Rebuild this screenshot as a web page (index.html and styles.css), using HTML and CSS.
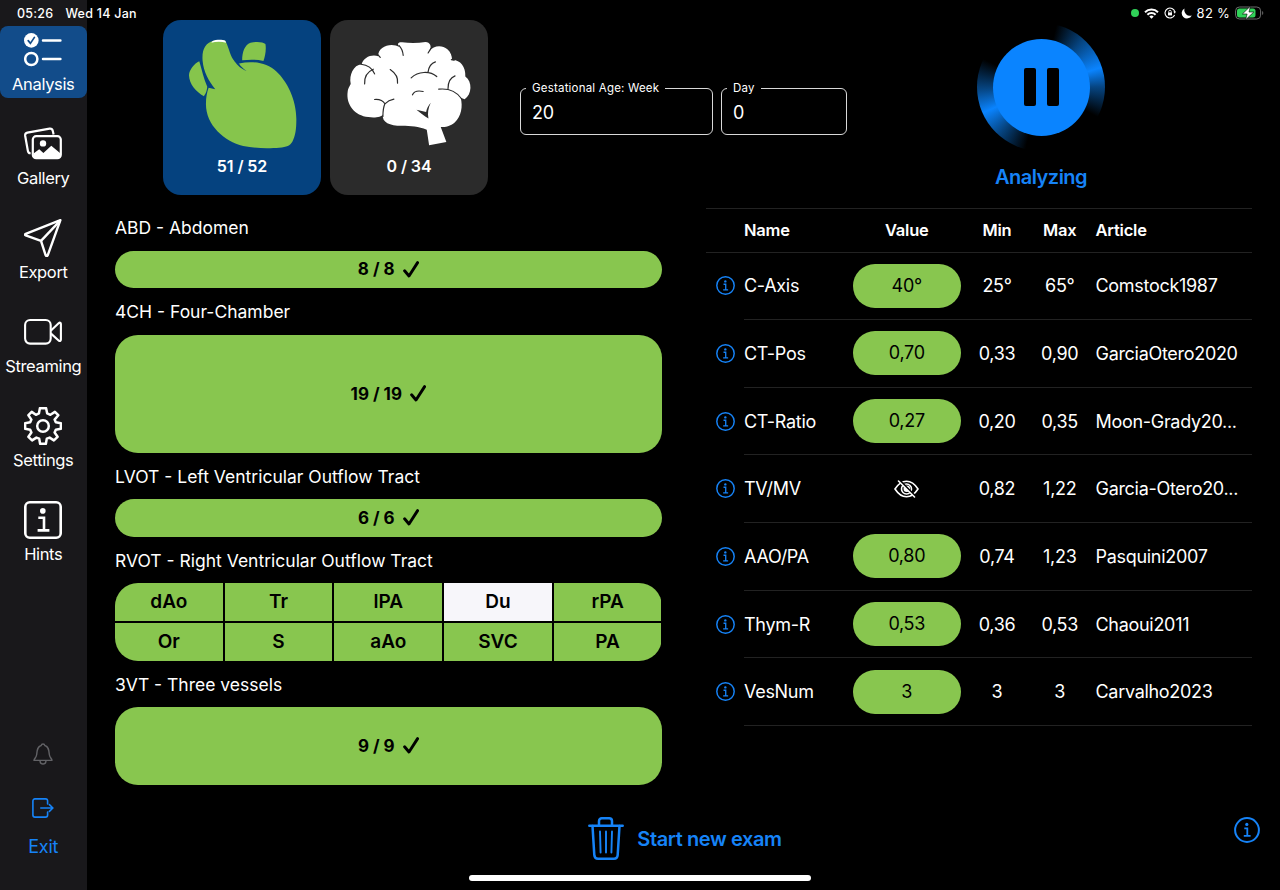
FILE: index.html
```html
<!DOCTYPE html>
<html lang="en">
<head>
    <meta charset="UTF-8">
    <meta name="viewport" content="width=device-width, initial-scale=1.0">
    <title>Analysis</title>
    <link rel="stylesheet" href="styles.css">
</head>
<body>

    <svg class="defs" width="0" height="0">
        <symbol id="info" viewBox="0 0 26 26">
            <circle cx="13" cy="13" r="11.9" fill="none" stroke="currentColor" stroke-width="2"/>
            <circle cx="12.8" cy="7.4" r="1.6" fill="currentColor"/>
            <path d="M10.3 11.3h3v7.4M9.8 18.9h6.8" fill="none" stroke="currentColor" stroke-width="1.8"/>
        </symbol>
        <symbol id="check" viewBox="0 0 16 17">
            <path d="M1.6 9.8L6 15L14.6 1.6" fill="none" stroke="currentColor" stroke-width="2.9" stroke-linecap="round" stroke-linejoin="round"/>
        </symbol>
    </svg>

    <div class="status-bar">
        <span class="time">05:26</span>
        <span class="date">Wed 14 Jan</span>
        <div class="status-icons">
            <span class="dot"></span>
            <svg width="15" height="11" viewBox="0 0 15 11" fill="none" stroke="#fff" stroke-width="2">
                <path d="M1 4.2a9.3 9.3 0 0 1 13 0M3.4 6.7a5.9 5.9 0 0 1 8.2 0"/>
                <path d="M7.5 10.8L5.3 8.6a3.2 3.2 0 0 1 4.4 0z" fill="#fff" stroke="none"/>
            </svg>
            <svg width="12" height="12" viewBox="0 0 12 12" fill="none" stroke="#fff" stroke-width="1.1">
                <path d="M10.6 8A5 5 0 1 1 10.9 5"/>
                <path d="M9.3 4.6h2.6L10.8 6.8z" fill="#fff" stroke="none"/>
                <rect x="4" y="5.4" width="4" height="3" fill="#fff" stroke="none"/>
                <path d="M4.7 5.6V4.6a1.3 1.3 0 0 1 2.6 0v1" stroke-width=".8"/>
            </svg>
            <svg width="11" height="11" viewBox="0 0 11 11">
                <path d="M3.6 .4A5.3 5.3 0 1 0 10.8 7.4A5.6 5.6 0 0 1 3.6 .4z" fill="#fff"/>
            </svg>
            <span class="battery-text">82 %</span>
            <svg width="29" height="14" viewBox="0 0 29 14">
                <rect x=".6" y="1" width="25" height="12" rx="3.8" fill="none" stroke="#6c6c6c"/>
                <rect x="2" y="2.4" width="18.5" height="9.2" rx="2.5" fill="#30d158"/>
                <path d="M27.2 5v4c1.4-.6 1.4-3.4 0-4z" fill="#6c6c6c"/>
                <path d="M15.4.2L7.4 8h4.7L10.600 13.800L18.800 6H14z" fill="#fff" stroke="#000" stroke-width=".6"/>
            </svg>
        </div>
    </div>

    <div class="app">
        <nav class="sidebar">
            <a class="nav-item active">
                <svg class="nav-icon" viewBox="0 0 38 38" fill="none" stroke="#fff" stroke-width="2.5" stroke-linecap="round">
                    <circle cx="7.3" cy="9.4" r="7.3" fill="#fff" stroke="none"/>
                    <path d="M4.2 9.6l2.2 2.8 4-6" stroke="#124c8a" stroke-width="1.7"/>
                    <circle cx="7.3" cy="28" r="6.1"/>
                    <path d="M19 9.4h17.4M19 28h17.4"/>
                </svg>
                <span>Analysis</span>
            </a>
            <a class="nav-item">
                <svg class="nav-icon" viewBox="0 0 38 38" fill="none" stroke="#fff" stroke-width="2.2" stroke-linejoin="round">
                    <path d="M6.6 28.2C5 28.4 4.2 27.6 3.9 26L1.2 11C.9 9 1.7 8 3.4 7.6L25.6 3.7C27.4 3.5 28.4 4.3 28.8 6L29.6 9.5"/>
                    <rect x="8.8" y="11.2" width="28" height="22" rx="3.4"/>
                    <circle cx="19" cy="18.4" r="3.2" fill="#fff" stroke="none"/>
                    <path d="M9.5 28.6L15.2 24.2L19.4 28L27.3 20.8L36.3 28.3V32L34 33.6H11.5L9.5 32z" fill="#fff" stroke="none"/>
                </svg>
                <span>Gallery</span>
            </a>
            <a class="nav-item">
                <svg class="nav-icon" viewBox="0 0 38 38" fill="none" stroke="#fff" stroke-width="2.4" stroke-linejoin="round">
                    <path d="M36.4 1.2L1.7 14.8C.8 15.2.8 16 1.7 16.4L17 21.8L21.6 36.2C22 37.3 23.2 37.3 23.7 36.3z"/>
                    <path d="M36.2 1.6L17 21.8"/>
                </svg>
                <span>Export</span>
            </a>
            <a class="nav-item">
                <svg class="nav-icon" viewBox="0 0 38 38" fill="none" stroke="#fff" stroke-width="2.1" stroke-linejoin="round">
                    <rect x="1.1" y="7" width="25.6" height="23.6" rx="5"/>
                    <path d="M27 17.4L34.6 10.2C35.8 9.2 36.9 9.5 36.9 11V26.6C36.9 28.2 35.8 28.5 34.6 27.4L27 20.6"/>
                </svg>
                <span>Streaming</span>
            </a>
            <a class="nav-item">
                <svg class="nav-icon" viewBox="0 0 38 38" fill="none" stroke="#fff" stroke-width="2.5" stroke-linejoin="round">
                    <path d="M15.9 1.2H22.1L23.2 6.4L26.4 7.8L30.9 4.9L34.3 8.2L30.6 12.6L31.8 15.3L36.9 16.2V21.8L31.8 22.7L30.6 25.6L33.6 29.8L29.9 33.4L25.6 30.6L22.8 31.6L21.9 36.8H16.1L15.2 31.6L12.4 30.6L8.1 33.4L4.4 29.8L7.4 25.6L6.2 22.7L1.1 21.8V16.2L6.2 15.3L7.4 12.6L4.4 8.2L7.7 4.9L11.9 7.8L14.9 6.4z"/>
                    <circle cx="19" cy="19" r="5.8"/>
                </svg>
                <span>Settings</span>
            </a>
            <a class="nav-item">
                <svg class="nav-icon" viewBox="0 0 38 38" fill="none" stroke="#fff" stroke-width="2.6">
                    <rect x="1.3" y="1.3" width="35.4" height="35.4" rx="4.5"/>
                    <circle cx="18.8" cy="9.9" r="2.8" fill="#fff" stroke="none"/>
                    <path d="M14.3 16.8H20V29M13.6 29.4H25.4"/>
                </svg>
                <span>Hints</span>
            </a>

            <div class="sidebar-bottom">
                <svg width="20" height="22" viewBox="0 0 20 22" fill="none" stroke="#626266" stroke-width="1.4" stroke-linejoin="round">
                    <path d="M1 17.4C1.2 15.6 3.3 14.6 3.7 11.5C4.1 7.6 4.2 3.4 8.2 2.5C8.5.5 11.5.5 11.8 2.5C15.8 3.4 15.9 7.6 16.3 11.5C16.7 14.6 18.8 15.6 19 17.4z"/>
                    <path d="M7 18C7.2 22 12.8 22 13 18"/>
                </svg>
                <a class="exit">
                    <svg width="22" height="20" viewBox="0 0 22 20" fill="none" stroke="#1683f7" stroke-width="1.6" stroke-linecap="round" stroke-linejoin="round">
                        <path d="M15.6 6V3C15.6 1.6 14.8.9 13.5.9H3C1.7.9.9 1.7.9 3V17C.9 18.3 1.7 19.1 3 19.1H13.5C14.8 19.1 15.6 18.4 15.6 17V14"/>
                        <path d="M8.8 10H20.8M17.4 6.6L20.9 10L17.4 13.4"/>
                    </svg>
                    <span>Exit</span>
                </a>
            </div>
        </nav>

        <main class="main">
            <header class="top">
                <div class="organ organ-active">
                    <svg class="heart" viewBox="90 80 340 340">
                        <path fill="#86c54c" d="M172 91C186 88 198 88 208 91C217 106 222 132 232 148C238 156 243 160 250 160C290 150 335 158 362 184C395 214 423 272 422 330C422 358 419 378 410 395C403 407 394 411 370 413C345 415 300 416 262 408C205 393 150 345 150 282C150 262 153 247 158 233L178 237C158 212 143 185 140 152C137 118 148 98 172 91z"/>
                        <path fill="#05427f" d="M234 150C246 168 258 177 272 182C262 175 254 168 249 159L242 154z"/>
                        <path fill="#86c54c" d="M259 150C259 125 266 104 284 97C304 93 322 95 329 101C332 118 328 138 323 152C300 147 280 148 259 150z"/>
                        <path fill="#86c54c" d="M130 153C115 160 100 178 99 195C100 222 120 245 144 258C150 250 152 245 154 230C143 205 138 180 130 153z"/>
                        <path fill="#fff" d="M170 92C180 87 200 87 208 91L211 97C198 93 180 93 166 97z"/>
                    </svg>
                    <span>51 / 52</span>
                </div>
                <div class="organ">
                    <svg class="brain" viewBox="570 90 385 325">
                        <path fill="#fff" d="M620 163C624 142 652 131 670 139C668 108 712 97 734 112C724 100 732 96 742 97C765 100 790 100 812 96C826 97 832 108 824 124C836 106 862 104 878 118C888 127 892 138 892 150C914 148 934 168 932 200C954 215 952 255 930 268L918 264C925 290 920 320 900 338C888 349 872 352 858 352L875 397L823 407L816 360C790 350 770 348 740 348C705 348 680 338 684 314C680 322 660 325 640 322C600 318 572 285 578 245C580 232 588 224 587 222C582 195 595 165 620 163z"/>
                        <g fill="none" stroke="#2b2b2b" stroke-width="3.6" stroke-linecap="round">
                            <path d="M618 163C640 165 652 175 659 192M629 222C628 205 632 188 655 178"/>
                            <path d="M706 179C722 190 730 205 728 220"/>
                            <path d="M769 204C790 184 825 182 846 200M820 186C822 172 830 160 842 156"/>
                            <path d="M880 236C880 218 888 203 901 198M852 238C880 235 905 245 920 266"/>
                            <path d="M659 269C672 268 684 272 690 282C696 276 706 270 717 268M690 282C684 295 684 305 684 320"/>
                            <path d="M773 255C778 244 792 242 805 245"/>
                            <path d="M732 106C740 114 744 124 745 136M668 133L676 142M828 116L820 129M890 149L898 151"/>
                        </g>
                        <path fill="#2b2b2b" d="M785 300L814 307C816 296 820 288 828 279C820 296 818 310 821 326C808 320 796 308 785 300z"/>
                    </svg>
                    <span>0 / 34</span>
                </div>

                <fieldset class="field field-week">
                    <legend>Gestational Age: Week</legend>
                    <span>20</span>
                </fieldset>
                <fieldset class="field field-day">
                    <legend>Day</legend>
                    <span>0</span>
                </fieldset>

                <div class="analyze">
                    <div class="spinner">
                        <div class="pause"><i></i><i></i></div>
                    </div>
                    <span>Analyzing</span>
                </div>
            </header>

            <div class="content">
                <section class="planes">
                    <h3>ABD - Abdomen</h3>
                    <div class="bar">8 / 8 <svg><use href="#check"/></svg></div>

                    <h3>4CH - Four-Chamber</h3>
                    <div class="bar bar-large">19 / 19 <svg><use href="#check"/></svg></div>

                    <h3>LVOT - Left Ventricular Outflow Tract</h3>
                    <div class="bar">6 / 6 <svg><use href="#check"/></svg></div>

                    <h3>RVOT - Right Ventricular Outflow Tract</h3>
                    <div class="parts">
                        <div>dAo</div>
                        <div>Tr</div>
                        <div>lPA</div>
                        <div class="missing">Du</div>
                        <div>rPA</div>
                        <div>Or</div>
                        <div>S</div>
                        <div>aAo</div>
                        <div>SVC</div>
                        <div>PA</div>
                    </div>

                    <h3>3VT - Three vessels</h3>
                    <div class="bar bar-medium">9 / 9 <svg><use href="#check"/></svg></div>
                </section>

                <section class="measures">
                    <div class="row head">
                        <span></span>
                        <span>Name</span>
                        <span class="center">Value</span>
                        <span class="center">Min</span>
                        <span class="center">Max</span>
                        <span class="article">Article</span>
                    </div>
                    <div class="row">
                        <svg class="info"><use href="#info"/></svg>
                        <span>C-Axis</span>
                        <span class="pill">40°</span>
                        <span class="center">25°</span>
                        <span class="center">65°</span>
                        <span class="article">Comstock1987</span>
                    </div>
                    <div class="row">
                        <svg class="info"><use href="#info"/></svg>
                        <span>CT-Pos</span>
                        <span class="pill">0,70</span>
                        <span class="center">0,33</span>
                        <span class="center">0,90</span>
                        <span class="article">GarciaOtero2020</span>
                    </div>
                    <div class="row">
                        <svg class="info"><use href="#info"/></svg>
                        <span>CT-Ratio</span>
                        <span class="pill">0,27</span>
                        <span class="center">0,20</span>
                        <span class="center">0,35</span>
                        <span class="article">Moon-Grady20...</span>
                    </div>
                    <div class="row">
                        <svg class="info"><use href="#info"/></svg>
                        <span>TV/MV</span>
                        <svg class="eye" width="25" height="18" viewBox="0 0 25 18" fill="none" stroke="#fff" stroke-width="1.6" stroke-linecap="round">
                            <path d="M1 9C4.5 3.6 8.5 1.3 12.5 1.3S20.5 3.6 24 9C20.5 14.4 16.5 16.7 12.5 16.7S4.5 14.4 1 9z"/>
                            <circle cx="12.5" cy="9" r="5"/>
                            <circle cx="12.8" cy="8.8" r="3.3" fill="#fff" stroke="none"/>
                            <path d="M5.5.5L21.5 16.5" stroke="#000" stroke-width="2.4"/>
                            <path d="M4.5 1L20.5 17"/>
                        </svg>
                        <span class="center">0,82</span>
                        <span class="center">1,22</span>
                        <span class="article">Garcia-Otero20...</span>
                    </div>
                    <div class="row">
                        <svg class="info"><use href="#info"/></svg>
                        <span>AAO/PA</span>
                        <span class="pill">0,80</span>
                        <span class="center">0,74</span>
                        <span class="center">1,23</span>
                        <span class="article">Pasquini2007</span>
                    </div>
                    <div class="row">
                        <svg class="info"><use href="#info"/></svg>
                        <span>Thym-R</span>
                        <span class="pill">0,53</span>
                        <span class="center">0,36</span>
                        <span class="center">0,53</span>
                        <span class="article">Chaoui2011</span>
                    </div>
                    <div class="row">
                        <svg class="info"><use href="#info"/></svg>
                        <span>VesNum</span>
                        <span class="pill">3</span>
                        <span class="center">3</span>
                        <span class="center">3</span>
                        <span class="article">Carvalho2023</span>
                    </div>
                </section>
            </div>

            <footer class="bottom">
                <a class="new-exam">
                    <svg width="36" height="43" viewBox="0 0 36 43" fill="none" stroke="#1683f7" stroke-width="2.5" stroke-linecap="round" stroke-linejoin="round">
                        <path d="M1.3 8.7H34.7"/>
                        <path d="M11 8.5V4.2C11 2.3 12 1.3 13.8 1.3H21.2C23 1.3 24 2.3 24 4.2V8.5"/>
                        <path d="M4.5 9L6.3 37.8C6.5 40.4 7.8 41.7 10 41.7H26C28.2 41.7 29.5 40.4 29.7 37.8L31.5 9"/>
                        <path d="M12 14.500L12.600 35.500M18 14.500V35.500M24 14.500L23.400 35.500" stroke-width="1.9"/>
                    </svg>
                    <span>Start new exam</span>
                </a>
                <svg class="help"><use href="#info"/></svg>
            </footer>
        </main>
    </div>

    <div class="home-indicator"></div>

</body>
</html>
```
FILE: styles.css
```css
* {
    box-sizing: border-box;
}

body {
    margin: 0;
    background: #000;
    color: #fff;
    font-family: Inter, "Liberation Sans", sans-serif;
    font-size: 18px;
    height: 890px;
    overflow: hidden;
}

.defs {
    position: absolute;
}

/* status bar lies over the sidebar and the page */
.status-bar {
    position: absolute;
    top: 0;
    left: 0;
    width: 100%;
    height: 26px;
    padding: 0 16px 0 17px;
    display: flex;
    align-items: center;
    font-size: 12.5px;
    font-weight: 500;
    letter-spacing: 0.25px;
}

.date {
    margin-left: 12px;
}

.status-icons {
    margin-left: auto;
    display: flex;
    align-items: center;
    gap: 5px;
}

.dot {
    width: 8px;
    height: 8px;
    border-radius: 50%;
    background: #30d158;
}

.battery-text {
    font-size: 13px;
    font-weight: 400;
}

.app {
    display: flex;
    height: 890px;
}

/* sidebar */
.sidebar {
    width: 86.5px;
    padding: 26px 0 32px;
    background: #19181b;
    display: flex;
    flex-direction: column;
    gap: 22px;
}

.nav-item {
    height: 72px;
    padding-top: 4.5px;
    border-radius: 8px;
    display: flex;
    flex-direction: column;
    align-items: center;
    gap: 5.5px;
    font-size: 16.5px;
    line-height: 21px;
    letter-spacing: -0.35px;
}

.nav-item.active {
    background: #124c8a;
}

.nav-icon {
    width: 38px;
    height: 38px;
}

.sidebar-bottom {
    margin-top: auto;
    display: flex;
    flex-direction: column;
    align-items: center;
    gap: 33px;
}

.exit {
    display: flex;
    flex-direction: column;
    align-items: center;
    gap: 18px;
    color: #1683f7;
    font-size: 18px;
    line-height: 22px;
    letter-spacing: -0.2px;
}

/* main area */
.main {
    flex: 1;
    display: flex;
    flex-direction: column;
    padding: 20px 28px 0 28.5px;
}

.top {
    height: 175px;
    padding-left: 48px;
    display: flex;
}

.organ {
    width: 158px;
    height: 175px;
    margin-right: 9px;
    border-radius: 18px;
    background: #2b2b2b;
    display: flex;
    flex-direction: column;
    align-items: center;
    justify-content: space-between;
    padding: 17px 0 18px;
    font-size: 16px;
    font-weight: 600;
    line-height: 21px;
    letter-spacing: -0.1px;
}

.organ-active {
    background: #05427f;
}

.heart {
    width: 113px;
    height: 113px;
}

.brain {
    width: 128px;
    height: 108px;
    margin-top: 3px;
}

.field {
    height: 54px;
    margin: 61px 8px 0 0;
    padding: 0 11px;
    border: 1px solid #d8d8d8;
    border-radius: 6px;
}

.field-week {
    width: 193px;
    margin-left: 23px;
}

.field-day {
    width: 126px;
}

.field legend {
    margin-left: -6px;
    padding: 0 6px;
    font-size: 11.5px;
    line-height: 15px;
    letter-spacing: 0.2px;
}

.field span {
    display: block;
    margin-top: 6px;
    line-height: 22px;
    letter-spacing: -0.3px;
}

.analyze {
    margin-left: auto;
    margin-right: 147px;
    margin-top: 3px;
    width: 128px;
    display: flex;
    flex-direction: column;
    align-items: center;
    gap: 14px;
    color: #1683f7;
    font-size: 20px;
    font-weight: 600;
    line-height: 24px;
    letter-spacing: -0.5px;
}

.spinner {
    width: 128px;
    height: 128px;
    border-radius: 50%;
    background: conic-gradient(transparent 14deg, #064582 42deg, #0a84ff 72deg, #064582 90deg, transparent 118deg, transparent 194deg, #064582 222deg, #0a84ff 246deg, #064582 268deg, transparent 296deg);
    display: flex;
    align-items: center;
    justify-content: center;
}

.pause {
    width: 97px;
    height: 97px;
    border-radius: 50%;
    background: #0a84ff;
    display: flex;
    align-items: center;
    justify-content: center;
    gap: 11px;
}

.pause i {
    width: 12px;
    height: 38px;
    border-radius: 2px;
    background: #000;
}

.content {
    display: flex;
    justify-content: space-between;
    height: 613px;
}

/* heart planes */
.planes {
    width: 546.5px;
    padding-top: 9.3px;
}

.planes h3 {
    margin: 0;
    padding-top: 2.2px;
    height: 46.4px;
    line-height: 44px;
    font-size: 17.5px;
    font-weight: 400;
}

.bar {
    height: 37.6px;
    border-radius: 19px;
    background: #88c64f;
    color: #000;
    display: flex;
    align-items: center;
    justify-content: center;
    gap: 8px;
    font-size: 17px;
    font-weight: 700;
}

.bar svg {
    width: 16px;
    height: 17px;
}

.bar-medium {
    height: 77.5px;
    border-radius: 23px;
}

.bar-large {
    height: 118px;
    border-radius: 23px;
}

.parts {
    height: 77.6px;
    border-radius: 23px;
    overflow: hidden;
    display: grid;
    grid-template-columns: repeat(5, 1fr);
    grid-template-rows: repeat(2, 1fr);
    gap: 2px;
    color: #000;
    font-size: 19px;
    font-weight: 600;
}

.parts div {
    display: flex;
    align-items: center;
    justify-content: center;
    background: #88c64f;
}

.parts .missing {
    background: #f7f6fa;
}

/* measurements table */
.measures {
    width: 546.5px;
    padding-top: 13px;
}

.row {
    display: grid;
    grid-template-columns: 38.5px 108.5px 108.5px 72px 53.5px 1fr;
    align-items: center;
    height: 67.65px;
    padding-bottom: 1px;
    background: linear-gradient(#222, #222) 38.5px 100% / 100% 1px no-repeat;
    letter-spacing: -0.3px;
}

.head {
    height: 44.5px;
    border-top: 1px solid #222;
    background-position: 0 100%;
    font-size: 16.5px;
    font-weight: 600;
    letter-spacing: -0.2px;
}

.center {
    text-align: center;
}

.article {
    padding-left: 9px;
    white-space: nowrap;
}

.pill {
    height: 44px;
    border-radius: 22px;
    background: #88c64f;
    color: #000;
    line-height: 44px;
    text-align: center;
}

.info {
    width: 19px;
    height: 19px;
    margin-left: 10px;
    color: #1683f7;
}

.eye {
    justify-self: center;
}

/* footer */
.bottom {
    position: relative;
    padding-top: 9px;
    display: flex;
    justify-content: center;
}

.new-exam {
    margin-left: 3px;
    display: flex;
    align-items: center;
    gap: 13px;
    color: #1683f7;
    font-size: 20px;
    font-weight: 600;
    letter-spacing: -0.4px;
}

.help {
    position: absolute;
    right: -8px;
    top: 9px;
    width: 26px;
    height: 26px;
    color: #1683f7;
}

.home-indicator {
    position: absolute;
    left: 469px;
    bottom: 9px;
    width: 342px;
    height: 6px;
    border-radius: 3px;
    background: #fff;
}
```
